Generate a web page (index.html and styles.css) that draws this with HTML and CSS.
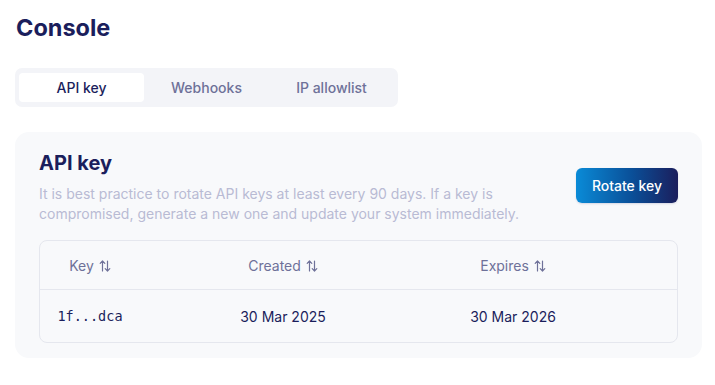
FILE: index.html
```html
<!DOCTYPE html>
<html lang="en">
<head>
<meta charset="UTF-8">
<meta name="viewport" content="width=device-width, initial-scale=1.0">
<title>Console</title>
<link rel="stylesheet" href="styles.css">
</head>
<body>
<h1 class="page-title">Console</h1>

<div class="tabs">
    <button class="tab active">API key</button>
    <button class="tab">Webhooks</button>
    <button class="tab">IP allowlist</button>
</div>

<div class="card">
    <div class="card-head">
        <div class="card-text">
            <h2 class="card-title">API key</h2>
            <p class="card-desc">It is best practice to rotate API keys at least every 90 days. If a key is compromised, generate a new one and update your system immediately.</p>
        </div>
        <button class="rotate-btn">Rotate key</button>
    </div>

    <div class="keys-table">
        <div class="row head-row">
            <div class="cell">Key <svg class="sort" viewBox="0 0 12 12" width="12" height="12"><path d="M3.5 11V1M1.2 3.3 3.5 1l2.3 2.3M8.5 1v10M6.2 8.7l2.3 2.3 2.3-2.3"/></svg></div>
            <div class="cell">Created <svg class="sort" viewBox="0 0 12 12" width="12" height="12"><path d="M3.5 11V1M1.2 3.3 3.5 1l2.3 2.3M8.5 1v10M6.2 8.7l2.3 2.3 2.3-2.3"/></svg></div>
            <div class="cell">Expires <svg class="sort" viewBox="0 0 12 12" width="12" height="12"><path d="M3.5 11V1M1.2 3.3 3.5 1l2.3 2.3M8.5 1v10M6.2 8.7l2.3 2.3 2.3-2.3"/></svg></div>
            <div class="cell"></div>
        </div>
        <div class="row">
            <div class="cell mono">1f...dca</div>
            <div class="cell">30 Mar 2025</div>
            <div class="cell">30 Mar 2026</div>
            <div class="cell"></div>
        </div>
    </div>
</div>
</body>
</html>
```

FILE: styles.css
```css
body {
    font-family: Inter, "Noto Sans", sans-serif;
    margin: 0;
    padding: 12px 13px 10px 15px;
    color: #1b1e5c;
    background: #fff;
}

.page-title {
    font-size: 23.5px;
    font-weight: 700;
    line-height: 32px;
    margin: 0 0 24px 1px;
    color: #1b1e5c;
}

.tabs {
    display: inline-flex;
    padding: 5px 4px;
    background: #f3f4f8;
    border-radius: 7px;
}

.tab {
    width: 125px;
    height: 29px;
    border: none;
    background: transparent;
    font-family: inherit;
    font-size: 14px;
    font-weight: 500;
    color: #6e7199;
    border-radius: 4px;
    cursor: pointer;
}

.tab.active {
    background: #fff;
    color: #1b1e5c;
}

.card {
    margin-top: 25px;
    background: #f8f9fb;
    border-radius: 14px;
    padding: 18px 24px 15px;
}

.card-head {
    display: flex;
    align-items: center;
    justify-content: space-between;
}

.card-title {
    font-size: 20px;
    font-weight: 700;
    line-height: 26px;
    margin: 0 0 8px;
}

.card-desc {
    max-width: 500px;
    margin: 0;
    font-size: 14px;
    line-height: 20px;
    color: #b9bbd4;
}

.rotate-btn {
    width: 102px;
    height: 35px;
    margin-top: -3px;
    border: none;
    border-radius: 6px;
    background: linear-gradient(90deg, #0a8bd7 0%, #0a4f98 55%, #1b1e5c 100%);
    box-shadow: 0 1px 2px rgba(27, 30, 92, 0.15);
    color: #fff;
    font-family: inherit;
    font-size: 14px;
    font-weight: 500;
    cursor: pointer;
}

.keys-table {
    margin-top: 16px;
    border: 1px solid #e5e7ee;
    border-radius: 8px;
}

.row {
    display: grid;
    grid-template-columns: 100px 286px 174px 1fr;
    height: 52px;
    align-items: center;
}

.head-row {
    height: 48px;
    border-bottom: 1px solid #e5e7ee;
}

.cell {
    text-align: center;
    font-size: 14px;
    color: #1b1e5c;
}

.head-row .cell {
    color: #6e7199;
}

.sort {
    vertical-align: -1px;
    margin-left: 1px;
    fill: none;
    stroke: #6e7199;
    stroke-width: 1.2;
    stroke-linecap: round;
    stroke-linejoin: round;
}

.mono {
    font-family: "DejaVu Sans Mono", "Liberation Mono", monospace;
    font-size: 13.5px;
}
```
